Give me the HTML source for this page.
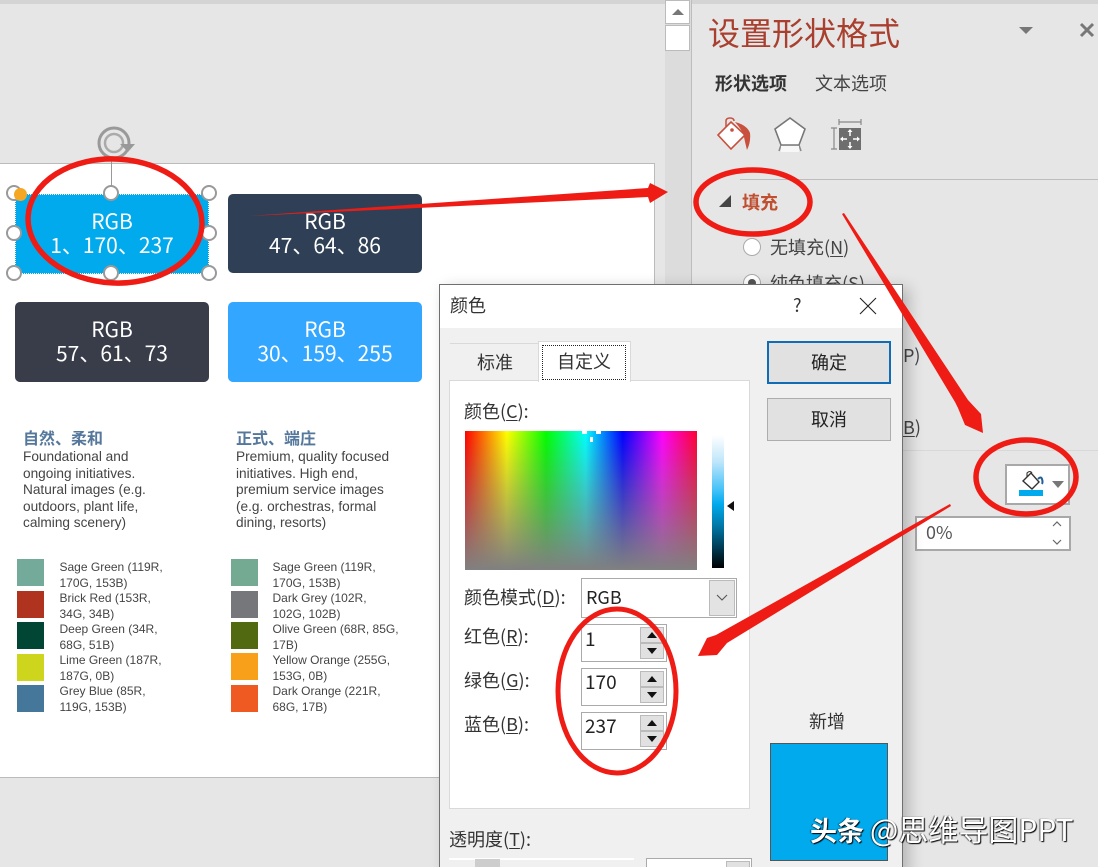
<!DOCTYPE html>
<html><head><meta charset="utf-8">
<style>
html,body{margin:0;padding:0;width:1098px;height:867px;overflow:hidden}
body{position:relative;background:#e6e6e6;font-family:"Liberation Sans","Noto Sans CJK SC",sans-serif;}
#w{position:absolute;left:0;top:0;width:1098px;height:867px;overflow:hidden}
.a{position:absolute;white-space:nowrap}
.c{font-family:"Noto Sans CJK SC","Liberation Sans",sans-serif}
.box{position:absolute;width:194px;height:80px;border-radius:5px;color:#fff;text-align:center;font-family:"Noto Sans CJK SC",sans-serif;font-size:21px;line-height:24px;box-sizing:border-box;padding-top:15px}
.sw{position:absolute;width:27px;height:27px}
.sl{position:absolute;font-size:12px;line-height:15.5px;color:#444;white-space:nowrap}
.d{position:absolute;font-size:13.65px;line-height:16.5px;color:#444;white-space:pre;left:0}
.t{position:absolute;font-family:"Noto Sans CJK SC",sans-serif;color:#333;font-size:18px;line-height:24px;white-space:nowrap}
.spin{position:absolute;width:86px;height:38px;background:#fff;border:1px solid #aaa;box-sizing:border-box}
.spin span{position:absolute;left:3px;top:0;font-family:"Noto Sans CJK SC",sans-serif;font-size:19px;line-height:26px;color:#222}
.sb{position:absolute;left:58px;width:24px;height:16px;background:#e1e1e1;border:1px solid #bbb;box-sizing:border-box}
.sb i{position:absolute;left:6px;top:4px;width:0;height:0;border-left:5px solid transparent;border-right:5px solid transparent}
.h{position:absolute;width:12px;height:12px;border-radius:50%;background:#fff;border:2.5px solid #999}
u{text-underline-offset:2px}
</style></head><body><div id="w">
<div class="a" style="left:0;top:0;width:1098px;height:4px;background:#d4d4d4"></div>

<!-- slide -->
<div class="a" style="left:0;top:163px;width:655px;height:615px;background:#fff;border-top:1px solid #bbb;border-bottom:1px solid #bbb;border-right:1px solid #bbb;box-sizing:border-box"></div>

<div class="box" style="left:15px;top:194px;background:#01aaed;border-radius:0;border:1px dotted #fff;padding-top:14px">RGB<br>1、170、237</div>
<div class="box" style="left:228px;top:194px;width:194px;height:79px;background:#2f4056">RGB<br>47、64、86</div>
<div class="box" style="left:15px;top:302px;background:#393d49">RGB<br>57、61、73</div>
<div class="box" style="left:228px;top:302px;background:#33a6ff">RGB<br>30、159、255</div>

<!-- headings -->
<div class="a c" style="left:23px;top:427px;font-size:16px;line-height:20px;font-weight:700;color:#54779b">自然、柔和</div>
<div class="a c" style="left:236px;top:427px;font-size:16px;line-height:20px;font-weight:700;color:#54779b">正式、端庄</div>
<div class="a" style="left:23px;top:449px;width:200px;height:90px"><div class="d">Foundational and
ongoing initiatives.
Natural images (e.g.
outdoors, plant life,
calming scenery)</div></div>
<div class="a" style="left:236px;top:449px;width:200px;height:90px"><div class="d">Premium, quality focused
initiatives. High end,
premium service images
(e.g. orchestras, formal
dining, resorts)</div></div>

<!-- swatches -->
<div class="sw" style="left:17px;top:559px;background:#74aa99"></div>
<div class="sw" style="left:17px;top:591px;background:#b03320"></div>
<div class="sw" style="left:17px;top:622px;background:#014634"></div>
<div class="sw" style="left:17px;top:654px;background:#cdd51d"></div>
<div class="sw" style="left:17px;top:685px;background:#447799"></div>
<div class="sw" style="left:231px;top:559px;background:#74aa91"></div>
<div class="sw" style="left:231px;top:591px;background:#76777b"></div>
<div class="sw" style="left:231px;top:622px;background:#516a12"></div>
<div class="sw" style="left:231px;top:653px;background:#f9a01b"></div>
<div class="sw" style="left:231px;top:685px;background:#ee5a22"></div>

<div class="sl" style="left:59.500px;top:560px">Sage Green (119R,<br>170G, 153B)</div>
<div class="sl" style="left:59.500px;top:591px">Brick Red (153R,<br>34G, 34B)</div>
<div class="sl" style="left:59.500px;top:622px">Deep Green (34R,<br>68G, 51B)</div>
<div class="sl" style="left:59.500px;top:653px">Lime Green (187R,<br>187G, 0B)</div>
<div class="sl" style="left:59.500px;top:684px">Grey Blue (85R,<br>119G, 153B)</div>
<div class="sl" style="left:272.500px;top:560px">Sage Green (119R,<br>170G, 153B)</div>
<div class="sl" style="left:272.500px;top:591px">Dark Grey (102R,<br>102G, 102B)</div>
<div class="sl" style="left:272.500px;top:622px">Olive Green (68R, 85G,<br>17B)</div>
<div class="sl" style="left:272.500px;top:653px">Yellow Orange (255G,<br>153G, 0B)</div>
<div class="sl" style="left:272.500px;top:684px">Dark Orange (221R,<br>68G, 17B)</div>

<!-- selection handles -->
<div class="a" style="left:111px;top:158px;width:1px;height:30px;background:#999"></div>
<svg class="a" style="left:95px;top:125px" width="42" height="36" viewBox="0 0 42 36"><circle cx="19" cy="18" r="15" fill="none" stroke="#999" stroke-width="3"/><circle cx="19" cy="18" r="9" fill="none" stroke="#aaa" stroke-width="2.500"/><path d="M25 19h15l-7 8z" fill="#999"/></svg>
<div class="h" style="left:6px;top:185px"></div>
<div class="h" style="left:103px;top:185px"></div>
<div class="h" style="left:201px;top:185px"></div>
<div class="h" style="left:6px;top:225px"></div>
<div class="h" style="left:201px;top:225px"></div>
<div class="h" style="left:6px;top:265px"></div>
<div class="h" style="left:103px;top:265px"></div>
<div class="h" style="left:201px;top:265px"></div>
<div class="a" style="left:14px;top:188px;width:13px;height:13px;border-radius:50%;background:#f5a623"></div>

<!-- scrollbar -->
<div class="a" style="left:665px;top:0;width:27px;height:867px;background:#dcdcdc;border-right:1px solid #bdbdbd;box-sizing:border-box"></div>
<div class="a" style="left:665px;top:0;width:25px;height:24px;background:#fff;border:1px solid #bbb;box-sizing:border-box"></div>
<div class="a" style="left:672px;top:9px;width:0;height:0;border-left:6px solid transparent;border-right:6px solid transparent;border-bottom:6px solid #777"></div>
<div class="a" style="left:665px;top:25px;width:25px;height:26px;background:#fff;border:1px solid #bbb;box-sizing:border-box"></div>

<!-- panel -->
<div class="a c" style="left:708px;top:10px;font-size:32px;line-height:44px;color:#a93f2e">设置形状格式</div>
<div class="a" style="left:1019px;top:27px;width:0;height:0;border-left:7px solid transparent;border-right:7px solid transparent;border-top:7px solid #777"></div>
<svg class="a" style="left:1079px;top:22px" width="16" height="16" viewBox="0 0 16 16"><path d="M2 2L14 14M14 2L2 14" stroke="#777" stroke-width="3"/></svg>
<div class="a c" style="left:715px;top:70px;font-size:18px;line-height:26px;font-weight:700;color:#333">形状选项</div>
<div class="a c" style="left:815px;top:70px;font-size:18px;line-height:26px;color:#444">文本选项</div>

<svg class="a" style="left:716px;top:116px" width="38" height="36" viewBox="0 0 38 36"><path d="M2 19L15 6L29 19L15 33Z" fill="#fff" stroke="#c8503c" stroke-width="1.600"/><path d="M10 11V5q0-3 4-3t4 3" fill="none" stroke="#c8503c" stroke-width="1.500"/><circle cx="16" cy="14" r="1.800" fill="#c8503c"/><path d="M19 6q12 3 15 11q1 9-3 17q-2-8-3-13q-1-6-9-15z" fill="#c8503c"/></svg>
<svg class="a" style="left:773px;top:116px" width="34" height="36" viewBox="0 0 34 36"><path d="M17 2L32 13L26 29H8L2 13Z" fill="#fff" stroke="#777" stroke-width="1.600"/><path d="M8 29L6 35M26 29L28 35" stroke="#888" stroke-width="1.500"/><rect x="8" y="30" width="18" height="6" fill="#f7f7f7"/></svg>
<svg class="a" style="left:828px;top:117px" width="36" height="36" viewBox="0 0 36 36"><path d="M11 2V8M33 2V8M11 5H33M3 11H9M3 32H9M6 11V32" stroke="#888" stroke-width="1.200" fill="none"/><rect x="11" y="11" width="22" height="22" fill="#6e6e6e"/><path d="M22 13V19M22 25V31M13 22H19M25 22H31" stroke="#fff" stroke-width="1.500"/><path d="M22 12l-2.500 3h5zM22 32l-2.500-3h5zM12 22l3-2.500v5zM32 22l-3-2.500v5z" fill="#fff"/></svg>

<div class="a" style="left:740px;top:179px;width:358px;height:1px;background:#bdbdbd"></div>
<div class="a" style="left:719px;top:195px;width:0;height:0;border-left:12px solid transparent;border-bottom:12px solid #444"></div>
<div class="a c" style="left:742px;top:190px;font-size:18px;line-height:24px;font-weight:700;color:#bf4f2f">填充</div>
<div class="a" style="left:743px;top:238px;width:18px;height:18px;border-radius:50%;background:#fff;border:1px solid #aaa;box-sizing:border-box"></div>
<div class="a c" style="left:770px;top:235px;font-size:18px;line-height:24px;color:#444">无填充(<u>N</u>)</div>
<div class="a" style="left:743px;top:274px;width:18px;height:18px;border-radius:50%;background:#fff;border:1px solid #aaa;box-sizing:border-box"></div>
<div class="a" style="left:748px;top:279px;width:8px;height:8px;border-radius:50%;background:#555"></div>
<div class="a c" style="left:770px;top:271px;font-size:18px;line-height:24px;color:#444">纯色填充(<u>S</u>)</div>
<div class="a c" style="left:903px;top:343px;font-size:18px;line-height:24px;color:#444">P)</div>
<div class="a c" style="left:903px;top:415px;font-size:18px;line-height:24px;color:#444"><u>B</u>)</div>
<div class="a" style="left:903px;top:450px;width:195px;height:1px;background:#d8d8d8"></div>

<!-- fill button -->
<div class="a" style="left:1005px;top:464px;width:65px;height:41px;background:#fff;border:2px solid #a8a8a8;box-sizing:border-box"></div>
<svg class="a" style="left:1017px;top:470px" width="32" height="28" viewBox="0 0 32 28"><path d="M6 11L14 3L22 12L15 19Z" fill="#fff" stroke="#333" stroke-width="1.400"/><path d="M10 7V3q3-3 5 0" fill="none" stroke="#333" stroke-width="1.100"/><path d="M21 9q3-3 4 0t0 5" fill="none" stroke="#1f5f9a" stroke-width="2"/><rect x="2" y="20" width="24" height="6" fill="#01aaed"/></svg>
<div class="a" style="left:1052px;top:481px;width:0;height:0;border-left:6px solid transparent;border-right:6px solid transparent;border-top:7px solid #777"></div>
<div class="a" style="left:915px;top:516px;width:156px;height:35px;background:#fff;border:2px solid #a8a8a8;box-sizing:border-box"></div>
<div class="a c" style="left:926px;top:519px;font-size:18px;line-height:26px;color:#555">0%</div>
<svg class="a" style="left:1050px;top:519px" width="14" height="30" viewBox="0 0 14 30"><path d="M3 7l4-4 4 4M3 21l4 4 4-4" fill="none" stroke="#666" stroke-width="1.200"/></svg>

<!-- dialog -->
<div class="a" style="left:439px;top:284px;width:464px;height:590px;background:#f0f0f0;border:1px solid #6f6f6f;box-sizing:border-box;box-shadow:6px 4px 14px rgba(0,0,0,.22)"></div>
<div class="a" style="left:440px;top:285px;width:462px;height:43px;background:#fff"></div>
<div class="t" style="left:450px;top:293px">颜色</div>
<div class="t" style="left:793px;top:293px">?</div>
<svg class="a" style="left:859px;top:297px" width="18" height="18" viewBox="0 0 18 18"><path d="M1 1L17 17M17 1L1 17" stroke="#222" stroke-width="1.100"/></svg>

<!-- tabs -->
<div class="a" style="left:450px;top:343px;width:88px;height:38px;border-top:1px solid #d9d9d9;box-sizing:border-box"></div>
<div class="t" style="left:477px;top:350px">标准</div>
<div class="a" style="left:449px;top:380px;width:301px;height:429px;background:#fff;border:1px solid #d9d9d9;box-sizing:border-box"></div>
<div class="a" style="left:538px;top:341px;width:93px;height:41px;background:#fff;border:1px solid #d9d9d9;border-bottom:none;box-sizing:border-box"></div>
<div class="a" style="left:542px;top:345px;width:84px;height:35px;border:1px dotted #222;box-sizing:border-box"></div>
<div class="t" style="left:557px;top:349px">自定义</div>

<div class="t" style="left:464px;top:399px">颜色(<u>C</u>):</div>

<!-- colour picker -->
<div class="a" style="left:465px;top:431px;width:232px;height:139px;background:linear-gradient(to bottom,rgba(128,128,128,0),rgba(128,128,128,1)),linear-gradient(to right,#f00 0%,#ff0 18%,#0f0 35%,#0ff 52%,#00f 68%,#f0f 85%,#f03 100%)"></div>
<div class="a" style="left:582px;top:431px;width:5px;height:3px;background:#fff"></div>
<div class="a" style="left:596px;top:431px;width:5px;height:3px;background:#fff"></div>
<div class="a" style="left:590px;top:437px;width:3px;height:5px;background:#fff"></div>
<div class="a" style="left:712px;top:435px;width:12px;height:133px;background:linear-gradient(to bottom,#fff 0%,#bfe6fa 20%,#40c0f8 42%,#01aaed 52%,#0079a8 68%,#003a52 85%,#000 100%)"></div>
<div class="a" style="left:727px;top:501px;width:0;height:0;border-top:5px solid transparent;border-bottom:5px solid transparent;border-right:7px solid #111"></div>

<div class="t" style="left:464px;top:585px">颜色模式(<u>D</u>):</div>
<div class="a" style="left:581px;top:578px;width:156px;height:40px;background:#fff;border:1px solid #aaa;box-sizing:border-box"></div>
<div class="a c" style="left:586px;top:584px;font-size:18px;line-height:26px;color:#222">RGB</div>
<div class="a" style="left:709px;top:580px;width:26px;height:36px;background:#e3e3e3;border:1px solid #bbb;box-sizing:border-box"></div>
<svg class="a" style="left:715px;top:593px" width="14" height="10" viewBox="0 0 14 10"><path d="M2 2l5 5 5-5" fill="none" stroke="#555" stroke-width="1.100"/></svg>

<div class="t" style="left:464px;top:624px">红色(<u>R</u>):</div>
<div class="t" style="left:464px;top:668px">绿色(<u>G</u>):</div>
<div class="t" style="left:464px;top:712px">蓝色(<u>B</u>):</div>

<div class="spin" style="left:581px;top:624px"><span style="top:1px">1</span>
<div class="sb" style="top:2px"><i style="border-bottom:6px solid #111"></i></div>
<div class="sb" style="top:18px"><i style="border-top:6px solid #111"></i></div></div>
<div class="spin" style="left:581px;top:668px"><span>170</span>
<div class="sb" style="top:2px"><i style="border-bottom:6px solid #111"></i></div>
<div class="sb" style="top:18px"><i style="border-top:6px solid #111"></i></div></div>
<div class="spin" style="left:581px;top:712px"><span>237</span>
<div class="sb" style="top:2px"><i style="border-bottom:6px solid #111"></i></div>
<div class="sb" style="top:18px"><i style="border-top:6px solid #111"></i></div></div>

<!-- buttons -->
<div class="a c" style="left:767px;top:341px;width:124px;height:43px;background:#e1e1e1;border:2px solid #0f6cb5;box-sizing:border-box;text-align:center;font-size:18px;line-height:39px;color:#222">确定</div>
<div class="a c" style="left:767px;top:398px;width:124px;height:43px;background:#e1e1e1;border:1px solid #adadad;box-sizing:border-box;text-align:center;font-size:18px;line-height:41px;color:#222">取消</div>

<div class="t" style="left:809px;top:709px">新增</div>
<div class="a" style="left:770px;top:743px;width:118px;height:118px;background:#01aaed;border:1px solid #555;box-sizing:border-box"></div>

<div class="t" style="left:449px;top:827px">透明度(<u>T</u>):</div>
<div class="a" style="left:449px;top:858px;width:185px;height:2px;background:#fff"></div>
<div class="a" style="left:475px;top:859px;width:25px;height:8px;background:#cdcdcd"></div>
<div class="a" style="left:646px;top:858px;width:106px;height:12px;background:#fff;border:1px solid #aaa;box-sizing:border-box"></div>
<div class="a" style="left:726px;top:861px;width:24px;height:8px;background:#e1e1e1;border:1px solid #bbb;box-sizing:border-box"></div>

<!-- red annotations -->
<svg class="a" style="left:0;top:0" width="1098" height="867" viewBox="0 0 1098 867">
<g fill="none" stroke="#ee1c14">
<ellipse cx="115" cy="221" rx="87" ry="62" stroke-width="5.500" transform="rotate(3 115 221)"/>
<ellipse cx="753" cy="202" rx="57" ry="32" stroke-width="5.500"/>
<ellipse cx="1026" cy="477" rx="50" ry="37" stroke-width="5.500"/>
<ellipse cx="617" cy="691" rx="59" ry="82" stroke-width="5"/>
</g>
<g fill="#ee1c14">
<path d="M249 216L648 188L650 183L668 192L650 203L648 197Z"/>
<path d="M842 214L844 213L968 400L981 414L983 433L965 425L958 408L955 402Z"/>
<path d="M950 504L951 506L727 643L717 655L698 656L707 638L716 635Z"/>
</g>
</svg>

<!-- watermark -->
<div class="a c" style="left:810px;top:810px;font-size:27px;line-height:36px;color:#fff;text-shadow:1px 1px 1px #000,-1px 0 1px rgba(0,0,0,.6)"><b>头条</b><span style="font-size:30px;margin-left:6px">@思维导图PPT</span></div>
</div></body></html>
